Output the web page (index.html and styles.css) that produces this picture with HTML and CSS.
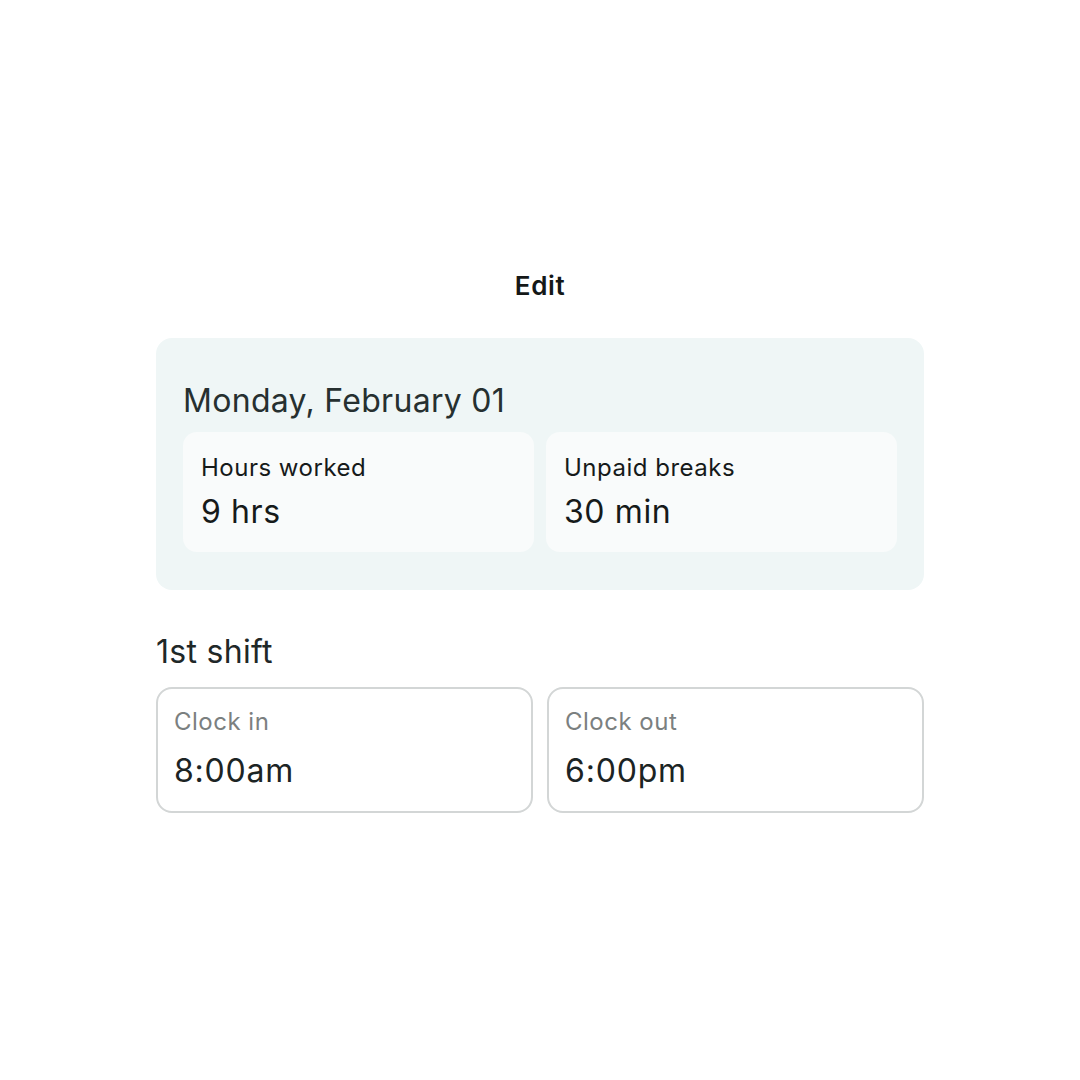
FILE: index.html
```html
<!DOCTYPE html>
<html>
<head>
<meta charset="utf-8">
<link rel="stylesheet" href="styles.css">
</head>
<body>
<main class="page">
  <h1 class="title">Edit</h1>
  <section class="summary">
    <h2 class="date">Monday, February 01</h2>
    <div class="stats">
      <div class="stat">
        <div class="stat-label">Hours worked</div>
        <div class="stat-value">9 hrs</div>
      </div>
      <div class="stat">
        <div class="stat-label">Unpaid breaks</div>
        <div class="stat-value">30 min</div>
      </div>
    </div>
  </section>
  <h2 class="shift">1st shift</h2>
  <div class="fields">
    <div class="field">
      <div class="field-label">Clock in</div>
      <div class="field-value">8:00am</div>
    </div>
    <div class="field">
      <div class="field-label">Clock out</div>
      <div class="field-value">6:00pm</div>
    </div>
  </div>
</main>
</body>
</html>
```

FILE: styles.css
```css
html, body {
  margin: 0;
  padding: 0;
  background: #ffffff;
}
body {
  font-family: Inter, "Liberation Sans", sans-serif;
  color: #1c2424;
}
.page {
  width: 768px;
  margin: 0 auto;
  padding-top: 270px;
}
.title {
  margin: 0;
  text-align: center;
  font-size: 26px;
  font-weight: 600;
  line-height: 32px;
  color: #141818;
  letter-spacing: 0.6px;
}
.summary {
  margin-top: 36px;
  background: #eff6f6;
  border-radius: 16px;
  padding: 43px 27px 38px 27px;
}
.date {
  margin: 0;
  font-size: 32px;
  font-weight: 400;
  line-height: 40px;
  color: #263030;
  letter-spacing: 0.3px;
}
.stats {
  margin-top: 11px;
  display: grid;
  grid-template-columns: 1fr 1fr;
  gap: 12px;
}
.stat {
  background: #f9fbfb;
  border-radius: 14px;
  padding: 20px 18px 22px;
}
.stat-label {
  font-size: 24px;
  line-height: 32px;
  color: #161a1a;
  letter-spacing: 0.5px;
}
.stat-value {
  margin-top: 10px;
  font-size: 32px;
  line-height: 36px;
  color: #161a1a;
  letter-spacing: 0.6px;
}
.shift {
  margin: 42px 0 0;
  font-size: 32px;
  font-weight: 400;
  line-height: 40px;
  color: #1f2828;
  letter-spacing: 0.3px;
}
.fields {
  margin-top: 15px;
  display: grid;
  grid-template-columns: 1fr 1fr;
  gap: 14px;
}
.field {
  border: 2px solid #d3d6d6;
  border-radius: 16px;
  padding: 17px 16px 22px;
  background: #ffffff;
}
.field-label {
  font-size: 24px;
  line-height: 32px;
  color: #7b8080;
  letter-spacing: 0.5px;
}
.field-value {
  margin-top: 15px;
  font-size: 32px;
  line-height: 36px;
  color: #1c2424;
  letter-spacing: 0.8px;
}
```
